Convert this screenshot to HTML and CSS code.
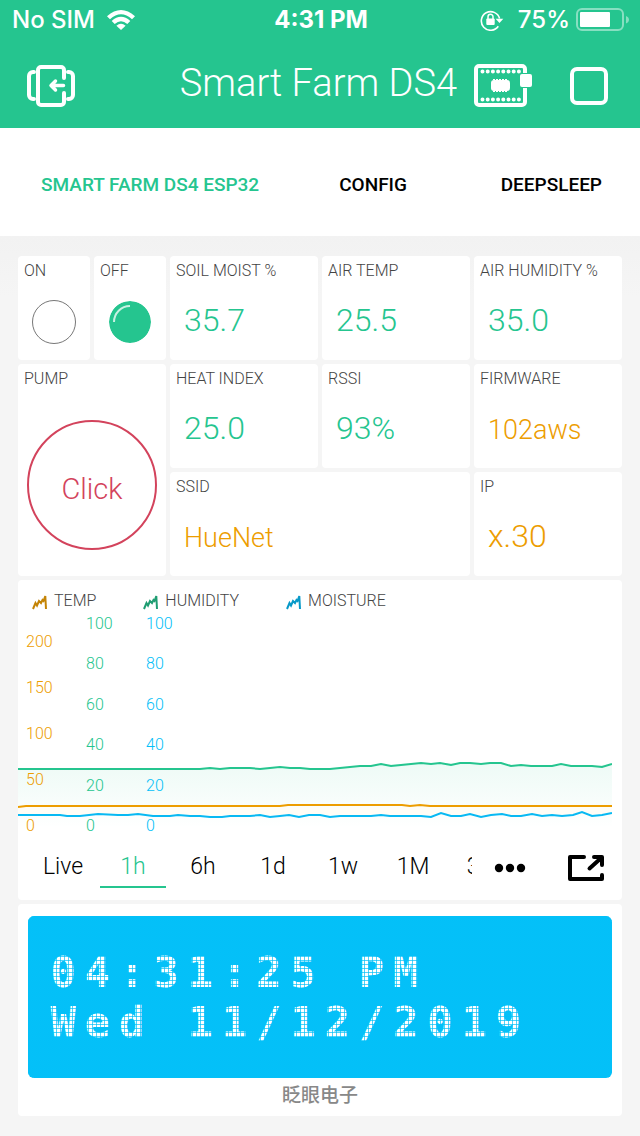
FILE: index.html
```html
<!DOCTYPE html>
<html lang="en">
<head>
<meta charset="utf-8">
<meta name="viewport" content="width=device-width, initial-scale=1">
<title>Smart Farm DS4</title>
<link rel="stylesheet" href="styles.css">
</head>
<body>
<header class="top">
  <div class="status">
    <div class="status-left">
      <span>No SIM</span>
      <svg width="28" height="20" viewBox="0 0 28 20" fill="#fff"><path d="M0 6.2Q14-6.2 28 6.2L25 9.2Q14-.6 3 9.2Z"/><path d="M4.700 11Q14 2.700 23.300 11L20.300 14Q14 8.300 7.700 14Z"/><path d="M9.400 15.700Q14 11.900 18.600 15.700L14 20Z"/></svg>
    </div>
    <span class="status-time">4:31 PM</span>
    <div class="status-right">
      <svg width="24" height="22" viewBox="0 0 24 22"><path d="M18.300 17.200A9.300 9.300 0 1 1 19.600 9.500" fill="none" stroke="#fff" stroke-width="1.600"/><path d="M15.600 9.800H23.300L19.500 14Z" fill="#fff"/><rect x="6.300" y="9.500" width="8.400" height="6.500" rx="1" fill="#fff"/><path d="M8 10V7.800a2.500 2.500 0 0 1 5 0V10" fill="none" stroke="#fff" stroke-width="1.500"/></svg>
      <span class="status-percent">75%</span>
      <svg width="54" height="24" viewBox="0 0 54 24"><rect x="1" y="1" width="46" height="21" rx="5" fill="none" stroke="#fff" stroke-opacity=".45" stroke-width="2"/><rect x="4" y="4" width="30" height="15" rx="1" fill="#fff"/><path d="M50 8c4 1.500 4 6 0 7.500Z" fill="#fff" fill-opacity=".45"/></svg>
    </div>
  </div>
  <div class="nav">
    <button class="icon-button" aria-label="Exit project">
      <svg width="48" height="42" viewBox="0 0 48 42" fill="none" stroke="#fff" stroke-width="4" stroke-linecap="round" stroke-linejoin="round"><path d="M37 13V5a3 3 0 0 0-3-3H14a3 3 0 0 0-3 3v32a3 3 0 0 0 3 3h20a3 3 0 0 0 3-3v-9"/><path d="M7 7H6a4 4 0 0 0-4 4v19a4 4 0 0 0 4 4h1M41 7h1a4 4 0 0 1 4 4v19a4 4 0 0 1-4 4h-1"/><path d="M36.500 20.500H25M28.500 16l-4.500 4.500 4.500 4.500" stroke-width="3.500"/></svg>
    </button>
    <h1 class="title">Smart Farm DS4</h1>
    <button class="icon-button" aria-label="Device">
      <svg width="58" height="44" viewBox="0 0 58 44"><rect x="2" y="2" width="49" height="39" rx="3" fill="none" stroke="#fff" stroke-width="4"/><path d="M8.500 7.500H47M8.500 35.500H47" fill="none" stroke="#fff" stroke-width="4" stroke-linecap="round" stroke-dasharray="0 5.200"/><rect x="17" y="16" width="19" height="11" rx="3" fill="#fff"/><path d="M19 15.500h15M19 27.500h15" stroke="#fff" stroke-width="1" stroke-dasharray="2 1"/><rect x="45" y="9" width="13" height="15" rx="3" fill="#25c58f"/><rect x="46" y="10" width="12" height="13" rx="2" fill="#fff"/></svg>
    </button>
    <button class="icon-button stop" aria-label="Stop">
      <svg width="38" height="38" viewBox="0 0 38 38"><rect x="2" y="2" width="34" height="34" rx="5" fill="none" stroke="#fff" stroke-width="4"/></svg>
    </button>
  </div>
</header>

<nav class="tabs">
  <button class="tab tab-active">SMART FARM DS4 ESP32</button>
  <button class="tab">CONFIG</button>
  <button class="tab">DEEPSLEEP</button>
</nav>

<main class="board">
  <section class="card half"><h2 class="label">ON</h2><span class="led"></span></section>
  <section class="card half"><h2 class="label">OFF</h2><span class="led led-lit"><svg width="42" height="42" viewBox="0 0 42 42"><path d="M5 21A16 16 0 0 1 21 5" fill="none" stroke="#fff" stroke-opacity=".75" stroke-width="2"/></svg></span></section>
  <section class="card"><h2 class="label">SOIL MOIST %</h2><p class="value">35.7</p></section>
  <section class="card"><h2 class="label">AIR TEMP</h2><p class="value">25.5</p></section>
  <section class="card"><h2 class="label">AIR HUMIDITY %</h2><p class="value">35.0</p></section>
  <section class="card tall"><h2 class="label">PUMP</h2><button class="pump">Click</button></section>
  <section class="card"><h2 class="label">HEAT INDEX</h2><p class="value">25.0</p></section>
  <section class="card"><h2 class="label">RSSI</h2><p class="value">93%</p></section>
  <section class="card"><h2 class="label">FIRMWARE</h2><p class="value value-text">102aws</p></section>
  <section class="card wide"><h2 class="label">SSID</h2><p class="value value-text">HueNet</p></section>
  <section class="card"><h2 class="label">IP</h2><p class="value value-amber">x.30</p></section>

  <section class="card chart-card">
    <div class="legend">
      <span class="legend-item temp"><svg width="15" height="15" viewBox="0 0 15 15"><path d="M1 14L3.500 8L5 10.500L7 6L9 8L10.500 5L11.500 6L13.300 1L14 14"/></svg>TEMP</span>
      <span class="legend-item humidity"><svg width="15" height="15" viewBox="0 0 15 15"><path d="M1 14L3.500 8L5 10.500L7 6L9 8L10.500 5L11.500 6L13.300 1L14 14"/></svg>HUMIDITY</span>
      <span class="legend-item moisture"><svg width="15" height="15" viewBox="0 0 15 15"><path d="M1 14L3.500 8L5 10.500L7 6L9 8L10.500 5L11.500 6L13.300 1L14 14"/></svg>MOISTURE</span>
    </div>
    <div class="chart">
      <svg class="plot" viewBox="0 0 594 222" preserveAspectRatio="none">
        <defs><linearGradient id="fade" x1="0" y1="0" x2="0" y2="1"><stop offset="0" stop-color="#25c58f" stop-opacity=".08"/><stop offset="1" stop-color="#25c58f" stop-opacity="0"/></linearGradient></defs>
        <path fill="url(#fade)" d="M0 155H312L342 152L403 149L483 149L493 152H574L594 150V214H0Z"/>
        <path fill="#fffdf6" d="M0 193H594V201H0Z"/>
        <polyline class="line line-green" points="0,155 182,155 192,154 202,155 212,154 232,154 242,155 252,154 262,153 272,154 282,154 292,155 312,155 342,152 353,152 363,150 373,152 383,151 393,150 403,149 413,150 422,149 433,151 442,149 452,149 463,150 472,149 483,149 493,152 503,151 513,152 534,152 543,150 553,152 574,152 584,153 594,150"/>
        <polyline class="line line-amber" points="0,193 8,192 262,192 270,191 384,191 392,192 402,191 412,192 594,192"/>
        <polyline class="line line-blue" points="0,201 42,201 49,202 62,202 80,200 100,201 110,201 120,200 135,202 152,202 160,201 172,202 182,202 192,203 204,203 212,202 232,202 242,201 252,203 262,202 271,201 281,203 291,201 302,201 312,203 322,202 353,202 363,201 372,202 403,202 413,203 423,199 433,202 443,202 452,200 463,203 473,201 484,200 493,202 503,202 514,200 524,202 534,201 544,202 555,201 564,198 574,202 584,201 594,199"/>
      </svg>
      <div class="axes">
        <div class="axis axis-temp"><span>200</span><span>150</span><span>100</span><span>50</span><span>0</span></div>
        <div class="axis axis-humidity"><span>100</span><span>80</span><span>60</span><span>40</span><span>20</span><span>0</span></div>
        <div class="axis axis-moisture"><span>100</span><span>80</span><span>60</span><span>40</span><span>20</span><span>0</span></div>
      </div>
    </div>
    <div class="ranges">
      <div class="range-list">
        <button class="range">Live</button><button class="range range-active">1h</button><button class="range">6h</button><button class="range">1d</button><button class="range">1w</button><button class="range">1M</button><button class="range">3M</button>
      </div>
      <button class="tool" aria-label="More"><svg width="32" height="10" viewBox="0 0 32 10"><circle cx="5" cy="5" r="4.200"/><circle cx="16" cy="5" r="4.200"/><circle cx="27" cy="5" r="4.200"/></svg></button>
      <button class="tool" aria-label="Full screen"><svg width="36" height="26" viewBox="0 0 36 26" fill="none" stroke="#000" stroke-width="4" stroke-linecap="round" stroke-linejoin="round"><path d="M16 2H2V24H34V20M21.500 13.500L32 4M26 2H34V10"/></svg></button>
    </div>
  </section>

  <section class="card lcd-card">
    <div class="lcd">
      <div class="lcd-row"><span>0</span><span>4</span><span>:</span><span>3</span><span>1</span><span>:</span><span>2</span><span>5</span><span> </span><span>P</span><span>M</span></div>
      <div class="lcd-row"><span>W</span><span>e</span><span>d</span><span> </span><span>1</span><span>1</span><span>/</span><span>1</span><span>2</span><span>/</span><span>2</span><span>0</span><span>1</span><span>9</span></div>
    </div>
    <p class="caption" lang="zh">眨眼电子</p>
  </section>
</main>
</body>
</html>
```
FILE: styles.css
```css
:root {
  --green: #25c58f;
  --amber: #ed9d00;
  --blue: #04c0f8;
  --red: #d3435c;
}

* { box-sizing: border-box; }

body {
  margin: 0;
  background: #f5f5f5;
  color: #000;
  font-family: Roboto, "Noto Sans CJK SC", sans-serif;
}

button {
  margin: 0;
  padding: 0;
  border: 0;
  background: none;
  color: inherit;
  font: inherit;
}

svg { display: block; flex: none; }
h1, h2, p { margin: 0; }

.top { background: var(--green); color: #fff; }

.status {
  display: grid;
  grid-template-columns: 1fr auto 1fr;
  align-items: center;
  height: 40px;
  padding: 0 10px 0 12px;
  font: 500 24px/40px Inter, sans-serif;
}
.status-left, .status-right { display: flex; align-items: center; gap: 12px; }
.status-right { justify-content: flex-end; gap: 6px; }
.status-time { font-weight: 700; }
.status-percent { padding-left: 8px; }

.nav {
  display: flex;
  align-items: center;
  height: 88px;
  padding: 4px 32px 0 27px;
}
.title {
  margin-left: auto;
  padding: 0 17px 6px 0;
  font-size: 38px;
  font-weight: 300;
  line-height: 50px;
}
.stop { margin-left: 38px; }

.tabs {
  display: flex;
  gap: 80px;
  height: 108px;
  padding: 4px 38px 0 41px;
  background: #fff;
  font-size: 19px;
  font-weight: 500;
}
.tab:last-child { margin-left: auto; }
.tab-active { color: var(--green); }

.board {
  display: grid;
  grid-template-columns: repeat(8, 1fr);
  grid-auto-rows: minmax(104px, auto);
  gap: 4px;
  padding: 20px 18px;
  background: linear-gradient(#f2f2f2, #f5f5f5 60px);
}
.card {
  grid-column: span 2;
  display: flex;
  flex-direction: column;
  border-radius: 4px;
  background: #fff;
}
.half { grid-column: span 1; }
.tall { grid-row: span 2; }
.wide { grid-column: span 4; }

.label {
  padding: 5px 6px 0;
  color: #444;
  font-size: 16px;
  font-weight: 300;
  line-height: 20px;
}
.value {
  padding: 17px 14px 0;
  color: var(--green);
  font-size: 32px;
  font-weight: 300;
  line-height: 44px;
}
.value-amber, .value-text { color: var(--amber); }
.value-text { padding-top: 19px; font-size: 27px; }

.led {
  width: 44px;
  height: 44px;
  margin: 19px auto 0;
  border: 1px solid #777;
  border-radius: 50%;
}
.led-lit { border-color: #fff; background: var(--green); background-clip: padding-box; }

.pump {
  width: 130px;
  height: 130px;
  margin: 31px auto 0;
  padding-top: 8px;
  border: 2px solid var(--red);
  border-radius: 50%;
  color: var(--red);
  font-size: 29px;
  font-weight: 300;
}

.chart-card, .lcd-card { grid-column: 1 / -1; }
.legend {
  display: flex;
  gap: 47px;
  padding: 10px 14px 0;
  color: #444;
  font-size: 16px;
  font-weight: 300;
  line-height: 22px;
}
.legend-item { display: flex; align-items: center; gap: 7px; }
.legend-item svg { margin-top: 2px; fill: none; stroke: currentColor; stroke-width: 2; }
.temp svg { color: #c48406; }
.humidity svg { color: #1f9d72; }
.moisture svg { color: #0799c8; }

.chart { display: grid; padding: 2px 10px 0 0; }
.plot, .axes { grid-area: 1 / 1; }
.plot { width: 100%; height: 222px; }
.line { fill: none; stroke-width: 2; }
.line-green { stroke: var(--green); }
.line-amber { stroke: var(--amber); }
.line-blue { stroke: #08b9f3; }
.axes {
  display: flex;
  padding-left: 8px;
  font-size: 16px;
  font-weight: 300;
  line-height: 20px;
}
.axis {
  display: flex;
  flex-direction: column;
  justify-content: space-between;
  width: 60px;
}
.axis-temp { padding-top: 18px; color: var(--amber); }
.axis-humidity { color: var(--green); }
.axis-moisture { color: var(--blue); }

.ranges {
  display: flex;
  align-items: center;
  gap: 22px;
  padding: 8px 18px 12px 10px;
}
.range-list { display: flex; flex: 1; min-width: 0; overflow: hidden; }
.range {
  flex: 0 0 66px;
  height: 44px;
  margin: 0 2px;
  padding-top: 2px;
  border-bottom: 2px solid transparent;
  font-size: 23px;
  font-weight: 300;
}
.range-active { border-color: var(--green); color: var(--green); }
.tool { padding-top: 4px; }
.tool + .tool { margin-left: 20px; }

.lcd-card { padding: 12px 10px 4px; }
.lcd {
  position: relative;
  padding: 32px 18px 30px;
  border-radius: 6px;
  background: var(--blue);
  color: #fff;
}
/* Pixel gaps of the dot-matrix panel */
.lcd::after {
  content: "";
  position: absolute;
  inset: 0;
  border-radius: 6px;
  background:
    repeating-linear-gradient(90deg, #04c0f8b0 0 1px, transparent 1px 4px),
    repeating-linear-gradient(#04c0f8b0 0 1px, transparent 1px 4px);
}
.lcd-row {
  display: grid;
  grid-template-columns: repeat(16, 1fr);
  font: 700 42px/50px "DejaVu Sans Mono", monospace;
  text-align: center;
}
.caption {
  padding-top: 2px;
  color: #888;
  font-size: 19px;
  font-weight: 500;
  line-height: 32px;
  text-align: center;
}
```
